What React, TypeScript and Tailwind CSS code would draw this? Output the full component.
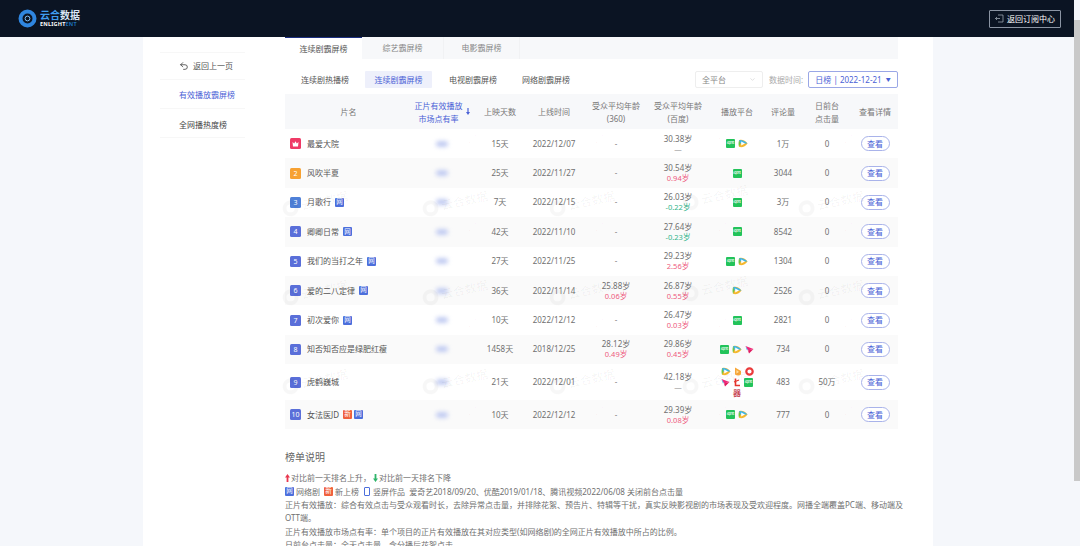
import React from 'react';
import { ChevronDown, Undo2 } from 'lucide-react';

type Platform = 'iqiyi' | 'tencent' | 'youku' | 'mango' | 'sohu' | 'letv' | 'pptv';

type Row = {
  name: string;
  tags: string[];
  days: string;
  date: string;
  age360?: [string, string];
  ageBaidu: [string, string];
  platforms: Platform[];
  comments: string;
  clicks: string;
};

const ROWS: Row[] = [
  { name: '最爱大院', tags: [], days: '15天', date: '2022/12/07', ageBaidu: ['30.38岁', '—'], platforms: ['iqiyi', 'tencent'], comments: '1万', clicks: '0' },
  { name: '风吹半夏', tags: [], days: '25天', date: '2022/11/27', ageBaidu: ['30.54岁', '0.94岁'], platforms: ['iqiyi'], comments: '3044', clicks: '0' },
  { name: '月歌行', tags: ['网'], days: '7天', date: '2022/12/15', ageBaidu: ['26.03岁', '-0.22岁'], platforms: ['iqiyi'], comments: '3万', clicks: '0' },
  { name: '卿卿日常', tags: ['网'], days: '42天', date: '2022/11/10', ageBaidu: ['27.64岁', '-0.23岁'], platforms: ['iqiyi'], comments: '8542', clicks: '0' },
  { name: '我们的当打之年', tags: ['网'], days: '27天', date: '2022/11/25', ageBaidu: ['29.23岁', '2.56岁'], platforms: ['iqiyi', 'tencent'], comments: '1304', clicks: '0' },
  { name: '爱的二八定律', tags: ['网'], days: '36天', date: '2022/11/14', age360: ['25.88岁', '0.06岁'], ageBaidu: ['26.87岁', '0.55岁'], platforms: ['tencent'], comments: '2526', clicks: '0' },
  { name: '初次爱你', tags: ['网'], days: '10天', date: '2022/12/12', ageBaidu: ['26.47岁', '0.03岁'], platforms: ['iqiyi'], comments: '2821', clicks: '0' },
  { name: '知否知否应是绿肥红瘦', tags: [], days: '1458天', date: '2018/12/25', age360: ['28.12岁', '0.49岁'], ageBaidu: ['29.86岁', '0.45岁'], platforms: ['iqiyi', 'tencent', 'youku'], comments: '734', clicks: '0' },
  { name: '虎鹤巍城', tags: [], days: '21天', date: '2022/12/01', ageBaidu: ['42.18岁', '—'], platforms: ['tencent', 'mango', 'sohu', 'youku', 'letv', 'iqiyi', 'pptv'], comments: '483', clicks: '50万' },
  { name: '女法医JD', tags: ['新', '网'], days: '10天', date: '2022/12/12', ageBaidu: ['29.39岁', '0.08岁'], platforms: ['iqiyi', 'tencent'], comments: '777', clicks: '0' },
];

const WATERMARKS = [
  { x: 450, y: 146, logo: false }, { x: 577, y: 146, logo: false }, { x: 700, y: 142, logo: false }, { x: 826, y: 146, logo: false },
  { x: 310, y: 203, logo: true }, { x: 450, y: 203, logo: true }, { x: 577, y: 203, logo: true }, { x: 710, y: 197, logo: true }, { x: 826, y: 203, logo: true },
  { x: 450, y: 234, logo: false }, { x: 577, y: 234, logo: false }, { x: 700, y: 234, logo: false }, { x: 826, y: 234, logo: false },
  { x: 310, y: 292, logo: true }, { x: 450, y: 292, logo: true }, { x: 577, y: 292, logo: true }, { x: 710, y: 288, logo: true }, { x: 826, y: 292, logo: true },
  { x: 310, y: 330, logo: false }, { x: 450, y: 330, logo: false }, { x: 577, y: 330, logo: false }, { x: 700, y: 330, logo: false }, { x: 826, y: 330, logo: false },
  { x: 310, y: 381, logo: true }, { x: 450, y: 381, logo: true }, { x: 577, y: 381, logo: true }, { x: 710, y: 381, logo: true }, { x: 826, y: 381, logo: true },
  { x: 450, y: 418, logo: false }, { x: 577, y: 418, logo: false }, { x: 700, y: 418, logo: false }, { x: 826, y: 418, logo: false },
];

const COLS = 'grid grid-cols-[127px_60px_56px_52px_72px_52px_66px_26px_62px_34px]';

const Cell = ({ children, className = '' }: { children: React.ReactNode; className?: string }) => (
  <div className={`flex items-center justify-center whitespace-nowrap text-center ${className}`}>{children}</div>
);

const PlatformIcon = ({ kind }: { kind: Platform }) => {
  if (kind === 'iqiyi') {
    return (
      <span className="flex h-[9px] w-[9px] items-center justify-center overflow-hidden rounded-[1px] bg-[#22c35a] text-[3px] font-bold leading-none text-white">
        iQIYI
      </span>
    );
  }
  if (kind === 'tencent') {
    return (
      <svg width="10" height="9" viewBox="0 0 10 9" className="shrink-0">
        <path d="M1 1.2C4 -.2 7.5 1.8 9.5 4.5 7.5 7.2 4 9.2 1 7.8Z" fill="#f5b82e" />
        <path d="M1 1.2C3.5.6 7 2 9.5 4.5L2.2 4.5Z" fill="#3db6e8" />
        <path d="M3.2 2.6 7 4.5 3.2 6.4Z" fill="#ffffff" />
        <path d="M1 7.8C.4 5.5.4 3.5 1 1.2L2.4 4.5Z" fill="#6cc644" />
      </svg>
    );
  }
  if (kind === 'youku') {
    return (
      <svg width="9" height="9" viewBox="0 0 9 9" className="shrink-0">
        <path d="M.5 1 8.5 4 3 5.5Z" fill="#f0287a" />
        <path d="M3 5.5 8.5 4 4 8.5Z" fill="#e0195e" />
        <path d="M.5 1 3 5.5 1.5 4.5Z" fill="#38b6ef" />
      </svg>
    );
  }
  if (kind === 'mango') {
    return (
      <svg width="8" height="9" viewBox="0 0 8 9" className="shrink-0">
        <path d="M1 .5 7 4 7 7.5Q4 9.5 1 7.5Z" fill="#f8a83a" />
        <path d="M2.5 3 5 5 2.5 6.5Z" fill="#ffe1a8" />
      </svg>
    );
  }
  if (kind === 'sohu') {
    return (
      <svg width="9" height="9" viewBox="0 0 9 9" className="shrink-0">
        <circle cx="4.5" cy="4.5" r="3.2" fill="none" stroke="#ea3b3b" strokeWidth="2.2" />
      </svg>
    );
  }
  if (kind === 'letv') {
    return (
      <svg width="8" height="9" viewBox="0 0 8 9" className="shrink-0">
        <path d="M2.5.5V7.5H7" fill="none" stroke="#e5352d" strokeWidth="1.6" />
        <path d="M1 4 6 2" fill="none" stroke="#e5352d" strokeWidth="1.2" />
      </svg>
    );
  }
  return <span className="text-[8px] font-bold leading-[9px] text-[#c9505c]">器</span>;
};

const AgeCell = ({ value }: { value?: [string, string] }) => {
  if (!value) return <Cell className="text-[#888]">-</Cell>;
  const [age, delta] = value;
  const tone = delta === '—' ? 'text-[#999]' : delta.startsWith('-') ? 'text-[#2fb48a]' : 'text-[#ee5a7e]';
  return (
    <Cell>
      <div className="flex flex-col leading-[10px]">
        <span>{age}</span>
        <span className={`text-[7.5px] ${tone}`}>{delta}</span>
      </div>
    </Cell>
  );
};

const RankBadge = ({ rank }: { rank: number }) => {
  const tone = rank === 1 ? 'bg-[#ef3a66]' : rank === 2 ? 'bg-[#f7a132]' : rank === 3 ? 'bg-[#4f80d8]' : 'bg-[#5a6fd9]';
  return (
    <span className={`flex h-[11px] w-[11px] shrink-0 items-center justify-center rounded-[1.5px] text-[7px] leading-none text-white ${tone}`}>
      {rank === 1 ? (
        <svg width="7" height="6" viewBox="0 0 7 6">
          <path d="M.5 1 2.2 2.6 3.5 .3 4.8 2.6 6.5 1 6 5.5H1Z" fill="#fff" />
        </svg>
      ) : (
        rank
      )}
    </span>
  );
};

const NameTag = ({ label }: { label: string }) => (
  <span
    className={`flex h-[9px] w-[9px] shrink-0 items-center justify-center rounded-[1px] text-[6.5px] leading-none text-white ${
      label === '新' ? 'bg-[#f0603c]' : 'bg-[#4c6fdc]'
    }`}
  >
    {label}
  </span>
);

const Watermark = ({ x, y, logo }: { x: number; y: number; logo: boolean }) => (
  <div
    className="pointer-events-none absolute flex -rotate-12 items-center gap-[3px] whitespace-nowrap text-[#000]/[0.03]"
    style={{ left: x - 28, top: y - 8 }}
  >
    {logo ? (
      <>
        <span className="h-[16px] w-[16px] rounded-full border-[4px] border-[#000]/[0.03]" />
        <span className="text-[12px] font-bold leading-none">云合数据</span>
      </>
    ) : (
      <span className="text-[10px] leading-none">@ 96631721</span>
    )}
  </div>
);

export default function App() {
  return (
    <div className="relative flex h-[546px] w-[1080px] overflow-hidden bg-[#f5f7fb] font-['Noto_Sans','Noto_Sans_CJK_SC',sans-serif] text-[8px] text-[#707070]">
      <div className="flex w-[1074px] flex-col">
        <header className="flex h-[37px] shrink-0 items-center justify-between bg-[#0b1423] pl-[18px] pr-[13px]">
          <div className="flex items-center gap-[3px]">
            <svg width="19" height="19" viewBox="0 0 19 19">
              <circle cx="9.5" cy="9.5" r="7" fill="none" stroke="#2f86e0" strokeWidth="4" />
              <circle cx="9.5" cy="9.5" r="2.4" fill="#0b1423" stroke="#7fbdf5" strokeWidth="1" />
            </svg>
            <div className="flex flex-col">
              <span className="text-[10px] font-bold leading-[11px] tracking-normal text-[#dbe6f5]">
                <span className="text-[#3f9cf0]">云合</span>数据
              </span>
              <span className="text-[5.5px] font-bold leading-[7px] tracking-[0.2px] text-white">
                ENLIGHT<span className="text-[#1c6fb8]">ENT</span>
              </span>
            </div>
          </div>
          <button className="flex h-[18px] w-[72px] items-center justify-center gap-[3px] rounded-[1px] border border-[#8b94a3] text-[8px] text-white">
            <svg width="9" height="9" viewBox="0 0 9 9" fill="none" stroke="#aeb6c2" strokeWidth="0.7">
              <path d="M3 1H8V8H3M5 4.5H.5M2 3 .5 4.5 2 6" />
            </svg>
            返回订阅中心
          </button>
        </header>

        <div className="flex min-h-0 flex-1 pl-[143px]">
          <main className="flex w-[790px] bg-white">
            <aside className="ml-[17px] mt-[15px] w-[85px] shrink-0">
              <div className="flex h-[28px] items-center gap-[4px] border-y border-[#f7f7f7] pl-[19px] text-[#555]">
                <Undo2 size={10} strokeWidth={1.8} className="text-[#333]" />
                返回上一页
              </div>
              <div className="flex h-[29px] items-center border-b border-[#f7f7f7] pl-[19px] pt-[1px] text-[#4a61d6]">有效播放霸屏榜</div>
              <div className="flex h-[29px] items-center border-b border-[#f7f7f7] pl-[19px] pt-[3px] text-[#444]">全网播热度榜</div>
            </aside>

            <section className="ml-[40px] w-[613px] shrink-0">
              <nav className="flex h-[22px] bg-[#f7f8fa]">
                <div className="flex w-[77px] items-center justify-center border-t border-[#1c2f80] bg-white text-[#555]">连续剧霸屏榜</div>
                <div className="flex w-[82px] items-center justify-center border-r border-[#f1f2f4] text-[#888]">综艺霸屏榜</div>
                <div className="flex w-[76px] items-center justify-center border-r border-[#f1f2f4] text-[#888]">电影霸屏榜</div>
              </nav>

              <div className="mt-[12px] flex h-[17px] items-center">
                <div className="flex items-center">
                  <span className="ml-[16px] w-[64px] text-[#555]">连续剧热播榜</span>
                  <span className="flex h-[17px] w-[67px] items-center justify-center rounded-[1px] bg-[#eef0fb] text-[#4a61d6]">连续剧霸屏榜</span>
                  <span className="ml-[17px] w-[73px] text-[#555]">电视剧霸屏榜</span>
                  <span className="text-[#555]">网络剧霸屏榜</span>
                </div>
                <div className="ml-auto flex items-center">
                  <div className="flex h-[17px] w-[68px] items-center justify-between rounded-[2px] border border-[#eeeeee] pl-[6px] pr-[6px] text-[#888]">
                    全平台
                    <ChevronDown size={7} className="text-[#ccc]" />
                  </div>
                  <span className="ml-[6px] w-[39px] text-[#aaa]">数据时间:</span>
                  <div className="flex h-[17px] w-[90px] items-center justify-center gap-[4px] rounded-[2px] border border-[#9aa7e6] text-[#4a61d6]">
                    日榜 | 2022-12-21
                    <span className="text-[5px] leading-none">▼</span>
                  </div>
                </div>
              </div>

              <div className={`${COLS} mt-[6px] h-[35px] bg-[#f7f8fa] leading-[13px] text-[#777]`}>
                <Cell>片名</Cell>
                <Cell className="gap-[3px] text-[#4a61d6]">
                  <span>
                    正片有效播放
                    <br />
                    市场点有率
                  </span>
                  <svg width="4" height="7" viewBox="0 0 4 7" fill="#4a61d6">
                    <path d="M1.4 0H2.6V4H4L2 7 0 4H1.4Z" />
                  </svg>
                </Cell>
                <Cell>上映天数</Cell>
                <Cell>上线时间</Cell>
                <Cell>
                  <span>
                    受众平均年龄
                    <br />
                    (360)
                  </span>
                </Cell>
                <Cell>
                  <span>
                    受众平均年龄
                    <br />
                    (百度)
                  </span>
                </Cell>
                <Cell>播放平台</Cell>
                <Cell>评论量</Cell>
                <Cell>
                  <span>
                    日前台
                    <br />
                    点击量
                  </span>
                </Cell>
                <Cell>查看详情</Cell>
              </div>

              {ROWS.map((row, index) => (
                <div
                  key={row.name}
                  className={`${COLS} ${index === 8 ? 'h-[36px]' : index === 9 ? 'h-[29px]' : 'h-[29.4px]'} ${index % 2 === 1 ? 'bg-[#fafafa]' : 'bg-white'}`}
                >
                  <div className="flex items-center whitespace-nowrap pl-[5px] text-[#555]">
                    <RankBadge rank={index + 1} />
                    <span className="ml-[6px]">{row.name}</span>
                    <span className="ml-[4px] flex gap-[2px]">
                      {row.tags.map((tag) => (
                        <NameTag key={tag} label={tag} />
                      ))}
                    </span>
                  </div>
                  <Cell>
                    <span className="h-[6px] w-[12px] rounded-full bg-[#c2ccf2] blur-[2px]" />
                  </Cell>
                  <Cell>{row.days}</Cell>
                  <Cell>{row.date}</Cell>
                  <AgeCell value={row.age360} />
                  <AgeCell value={row.ageBaidu} />
                  <Cell>
                    <div className="flex w-[40px] flex-wrap items-center justify-center gap-x-[3px] gap-y-[1.5px]">
                      {row.platforms.map((platform) => (
                        <PlatformIcon key={platform} kind={platform} />
                      ))}
                    </div>
                  </Cell>
                  <Cell>{row.comments}</Cell>
                  <Cell>{row.clicks}</Cell>
                  <Cell>
                    <button className="flex h-[15px] w-[29px] items-center justify-center rounded-full border border-[#a9b3ea] bg-white text-[#4a61d6]">
                      查看
                    </button>
                  </Cell>
                </div>
              ))}

              <h2 className="mt-[21px] text-[10px] leading-[14px] text-[#666]">榜单说明</h2>
              <div className="mt-[7px] w-[612px] whitespace-nowrap leading-[13.4px] text-[#707070]">
                <p className="flex items-center">
                  <svg width="5" height="8" viewBox="0 0 5 8" className="mr-[1px]" fill="#e8384f">
                    <path d="M2.5 0 5 3.5H3.4V8H1.6V3.5H0Z" />
                  </svg>
                  对比前一天排名上升{'\uFF0C'}
                  <svg width="5" height="8" viewBox="0 0 5 8" className="ml-[2px] mr-[1px]" fill="#2fb46a">
                    <path d="M2.5 8 5 4.5H3.4V0H1.6V4.5H0Z" />
                  </svg>
                  对比前一天排名下降
                </p>
                <p className="flex items-center">
                  <NameTag label="网" />
                  <span className="ml-[2px]">网络剧</span>
                  <span className="ml-[4px]"><NameTag label="新" /></span>
                  <span className="ml-[2px]">新上榜</span>
                  <span className="ml-[5px] h-[9px] w-[6px] rounded-[1px] border border-[#4c6fdc]" />
                  <span className="ml-[3px]">竖屏作品 &nbsp;爱奇艺2018/09/20、优酷2019/01/18、腾讯视频2022/06/08 关闭前台点击量</span>
                </p>
                <p>
                  {'正片有效播放\uFF1A综合有效点击与受众观看时长\uFF0C去除异常点击量\uFF0C并排除花絮、预告片、特辑等干扰\uFF0C真实反映影视剧的市场表现及受欢迎程度。网播全端覆盖PC端、移动端及'}
                  <br />
                  OTT端。
                </p>
                <p>{'正片有效播放市场点有率\uFF1A单个项目的正片有效播放在其对应类型(如网络剧)的全网正片有效播放中所占的比例。'}</p>
                <p>{'日前台点击量\uFF1A全天点击量\uFF0C含分播后花絮点击。'}</p>
              </div>
            </section>
          </main>
        </div>
      </div>

      <div className="flex w-[6px] flex-col bg-[#f5f7fb]">
        <div className="mt-[20px] h-[461px] w-full bg-[#c9c9c9]" />
      </div>

      {WATERMARKS.map((mark) => (
        <Watermark key={`${mark.x}-${mark.y}`} x={mark.x} y={mark.y} logo={mark.logo} />
      ))}
    </div>
  );
}
